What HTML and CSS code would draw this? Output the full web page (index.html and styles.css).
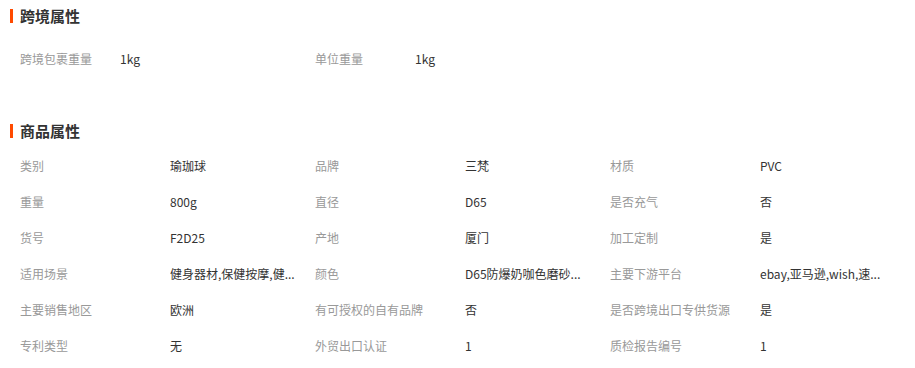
FILE: index.html
```html
<!DOCTYPE html>
<html lang="zh-CN">
<head>
<meta charset="utf-8">
<title>属性</title>
<link rel="stylesheet" href="styles.css">
</head>
<body>
<section class="block block-cross">
  <h2 class="title">跨境属性</h2>
  <div class="grid grid-cross">
    <span class="label">跨境包裹重量</span><span class="value">1kg</span>
    <span class="label">单位重量</span><span class="value">1kg</span>
  </div>
</section>
<section class="block block-goods">
  <h2 class="title">商品属性</h2>
  <div class="grid grid-goods">
    <span class="label">类别</span><span class="value">瑜珈球</span>
    <span class="label">品牌</span><span class="value">三梵</span>
    <span class="label">材质</span><span class="value">PVC</span>

    <span class="label">重量</span><span class="value">800g</span>
    <span class="label">直径</span><span class="value">D65</span>
    <span class="label">是否充气</span><span class="value">否</span>

    <span class="label">货号</span><span class="value">F2D25</span>
    <span class="label">产地</span><span class="value">厦门</span>
    <span class="label">加工定制</span><span class="value">是</span>

    <span class="label">适用场景</span><span class="value">健身器材,保健按摩,健...</span>
    <span class="label">颜色</span><span class="value">D65防爆奶咖色磨砂...</span>
    <span class="label">主要下游平台</span><span class="value">ebay,亚马逊,wish,速...</span>

    <span class="label">主要销售地区</span><span class="value">欧洲</span>
    <span class="label">有可授权的自有品牌</span><span class="value">否</span>
    <span class="label">是否跨境出口专供货源</span><span class="value">是</span>

    <span class="label">专利类型</span><span class="value">无</span>
    <span class="label">外贸出口认证</span><span class="value">1</span>
    <span class="label">质检报告编号</span><span class="value">1</span>
  </div>
</section>
</body>
</html>
```

FILE: styles.css
```css
html, body {
  margin: 0;
  padding: 0;
  background: #fff;
}
body {
  width: 915px;
  height: 368px;
  overflow: hidden;
  font-family: "Noto Sans CJK SC", "Liberation Sans", sans-serif;
  font-size: 12px;
  color: #333;
}
.block {
  padding-left: 10px;
}
.block-cross {
  padding-top: 6px;
}
.block-goods {
  padding-top: 44px;
}
.title {
  margin: 0;
  height: 20px;
  line-height: 20px;
  font-size: 15px;
  font-weight: bold;
  color: #333;
  display: flex;
  align-items: center;
  gap: 7px;
}
.title::before {
  content: "";
  width: 3px;
  height: 14px;
  background: #ff4a00;
  flex: none;
}
.grid {
  display: grid;
  padding-left: 10px;
}
.grid-cross {
  margin-top: 15px;
  grid-template-columns: 100px 195px 100px 195px;
}
.grid-goods {
  margin-top: 7px;
  grid-template-columns: 150px 145px 150px 145px 150px 145px;
}
.label, .value {
  height: 36px;
  line-height: 36px;
  white-space: nowrap;
  overflow: hidden;
}
.label {
  color: #999;
}
.value {
  color: #333;
}
```
